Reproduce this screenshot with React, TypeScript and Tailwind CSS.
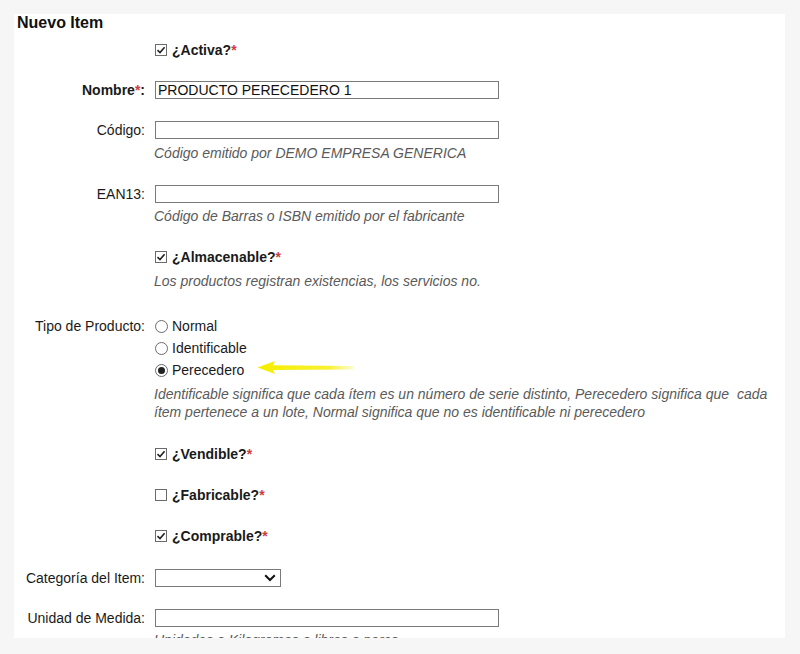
import React from 'react'

const font = { fontFamily: '"Liberation Sans", Arial, sans-serif' }

function Check({ checked }: { checked: boolean }) {
  return (
    <span className="inline-flex h-[12px] w-[12px] shrink-0 items-center justify-center border border-[#6b6b6b] bg-white">
      {checked && (
        <svg width="10" height="10" viewBox="0 0 10 10">
          <path d="M1.5 5.2 L4 7.6 L8.6 2.2" fill="none" stroke="#222" strokeWidth="1.6" />
        </svg>
      )}
    </span>
  )
}

function Radio({ checked }: { checked: boolean }) {
  return (
    <span className="inline-flex h-[13px] w-[13px] shrink-0 items-center justify-center rounded-full border border-[#6b6b6b] bg-white">
      {checked && <span className="h-[7px] w-[7px] rounded-full bg-[#222]" />}
    </span>
  )
}

function Req() {
  return <span className="text-[#d13b3b]">*</span>
}

function Label({ children }: { children: React.ReactNode }) {
  return <div className="w-[132px] shrink-0 pr-[1px] text-right">{children}</div>
}

function Row({ label, className, children }: { label?: React.ReactNode; className?: string; children: React.ReactNode }) {
  return (
    <div className={`flex h-[18px] items-center leading-[18px] ${className ?? ''}`}>
      <Label>{label}</Label>
      <div className="ml-[9px] flex items-center">{children}</div>
    </div>
  )
}

function Input({ value = '' }: { value?: string }) {
  return (
    <div className="flex h-[18px] w-[344px] items-center border border-[#7a7a7a] bg-white px-[2px] text-[14px] leading-[16px] text-[#111]">
      {value}
    </div>
  )
}

function Help({ children, className }: { children: React.ReactNode; className?: string }) {
  return (
    <div className={`ml-[140px] text-[14px] italic leading-[18px] text-[#5a5a5a] ${className ?? ''}`}>{children}</div>
  )
}

function CheckRow({ text, checked, className }: { text: string; checked: boolean; className?: string }) {
  return (
    <Row className={className}>
      <Check checked={checked} />
      <span className="ml-[5px] font-bold">
        {text}
        <Req />
      </span>
    </Row>
  )
}

export default function App() {
  return (
    <div className="h-[654px] w-[800px] overflow-hidden bg-[#f6f6f6] pt-[14px] pl-[14px]" style={font}>
      <div className="relative h-[624px] w-[771px] overflow-hidden bg-white text-[14px] text-[#1a1a1a]">
        <h1 className="mt-[1px] h-[16px] pl-[3px] text-[16px] leading-[16px] font-bold text-[#111]">Nuevo Item</h1>

        <CheckRow text="¿Activa?" checked className="mt-[10px]" />

        <Row
          className="mt-[22px]"
          label={
            <span className="font-bold">
              Nombre<Req />:
            </span>
          }
        >
          <Input value="PRODUCTO PERECEDERO 1" />
        </Row>

        <Row className="mt-[22px]" label="Código:">
          <Input />
        </Row>
        <Help className="mt-[5px]">Código emitido por DEMO EMPRESA GENERICA</Help>

        <Row className="mt-[23px]" label="EAN13:">
          <Input />
        </Row>
        <Help className="mt-[4px]">Código de Barras o ISBN emitido por el fabricante</Help>

        <CheckRow text="¿Almacenable?" checked className="mt-[23px]" />
        <Help className="mt-[6px]">Los productos registran existencias, los servicios no.</Help>

        <div className="mt-[25px] flex leading-[22px]">
          <Label>Tipo de Producto:</Label>
          <div className="ml-[9px] flex flex-col">
            {[
              { t: 'Normal', c: false },
              { t: 'Identificable', c: false },
              { t: 'Perecedero', c: true },
            ].map((r) => (
              <div key={r.t} className="flex h-[22px] items-center">
                <Radio checked={r.c} />
                <span className="ml-[4px]">{r.t}</span>
              </div>
            ))}
          </div>
        </div>
        <Help className="mt-[4px]">
          Identificable significa que cada ítem es un número de serie distinto, Perecedero significa que&nbsp; cada
          <br />
          ítem pertenece a un lote, Normal significa que no es identificable ni perecedero
        </Help>

        <CheckRow text="¿Vendible?" checked className="mt-[24px]" />
        <CheckRow text="¿Fabricable?" checked={false} className="mt-[23px]" />
        <CheckRow text="¿Comprable?" checked className="mt-[23px]" />

        <Row className="mt-[24px]" label="Categoría del Item:">
          <div className="flex h-[18px] w-[126px] items-center justify-end border border-[#7a7a7a] bg-white pr-[4px]">
            <svg width="12" height="8" viewBox="0 0 12 8">
              <path d="M1.2 1.2 L6 6 L10.8 1.2" fill="none" stroke="#111" strokeWidth="2" />
            </svg>
          </div>
        </Row>

        <Row className="mt-[22px]" label="Unidad de Medida:">
          <Input />
        </Row>
        <Help className="mt-[4px]">Unidades o Kilogramos o libras o pares</Help>

        {/* flecha amarilla */}
        <svg className="absolute left-[242px] top-[345px]" width="100" height="18" viewBox="0 0 100 18">
          <defs>
            <linearGradient id="ar" x1="0" x2="1" y1="0" y2="0">
              <stop offset="0" stopColor="#f5ee00" />
              <stop offset="0.75" stopColor="#f7f130" />
              <stop offset="1" stopColor="#faf590" stopOpacity="0.5" />
            </linearGradient>
            <filter id="bl" x="-10%" y="-50%" width="120%" height="200%">
              <feGaussianBlur stdDeviation="0.6" />
            </filter>
          </defs>
          <path
            d="M1.5 8.5 L19 2 L17 6.2 L97 7 L97 10.4 L17 11 L19 15 Z"
            fill="url(#ar)"
            filter="url(#bl)"
          />
        </svg>
      </div>
    </div>
  )
}
